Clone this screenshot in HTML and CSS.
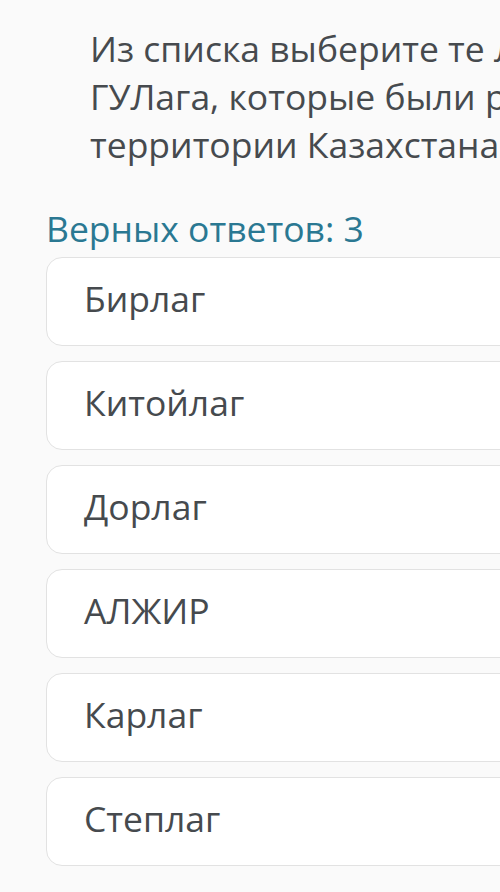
FILE: index.html
```html
<!DOCTYPE html>
<html lang="ru">
<head>
    <meta charset="UTF-8">
    <meta name="viewport" content="width=device-width, initial-scale=1.0">
    <title>Тест</title>
    <link rel="stylesheet" href="styles.css">
</head>
<body>
    <div class="quiz">
        <p class="question">Из списка выберите те ЛАГЕРЯ<br>ГУЛага, которые были расположены на<br>территории Казахстана.</p>

        <p class="hint">Верных ответов: 3</p>

        <ul class="options">
            <li class="option">Бирлаг</li>
            <li class="option">Китойлаг</li>
            <li class="option">Дорлаг</li>
            <li class="option">АЛЖИР</li>
            <li class="option">Карлаг</li>
            <li class="option">Степлаг</li>
        </ul>
    </div>
</body>
</html>
```

FILE: styles.css
```css
* {
    margin: 0;
    padding: 0;
    box-sizing: border-box;
}

html, body {
    overflow: hidden;
}

body {
    font-family: 'Open Sans', 'Noto Sans', sans-serif;
    background: #fafafa;
    color: #464a4e;
    height: 892px;
}

.quiz {
    width: 620px;
    padding-top: 24px;
    padding-left: 46px;
    font-size: 35.5px;
    line-height: 48px;
}

.question {
    padding-left: 44px;
    white-space: nowrap;
}

.hint {
    margin-top: 36px;
    color: #2a7892;
}

.options {
    list-style: none;
    display: flex;
    flex-direction: column;
    gap: 15px;
    margin-top: 5px;
}

.option {
    height: 89px;
    padding-top: 16px;
    padding-left: 37px;
    background: #fff;
    border: 1px solid #e2e2e2;
    border-radius: 16px;
}
```
